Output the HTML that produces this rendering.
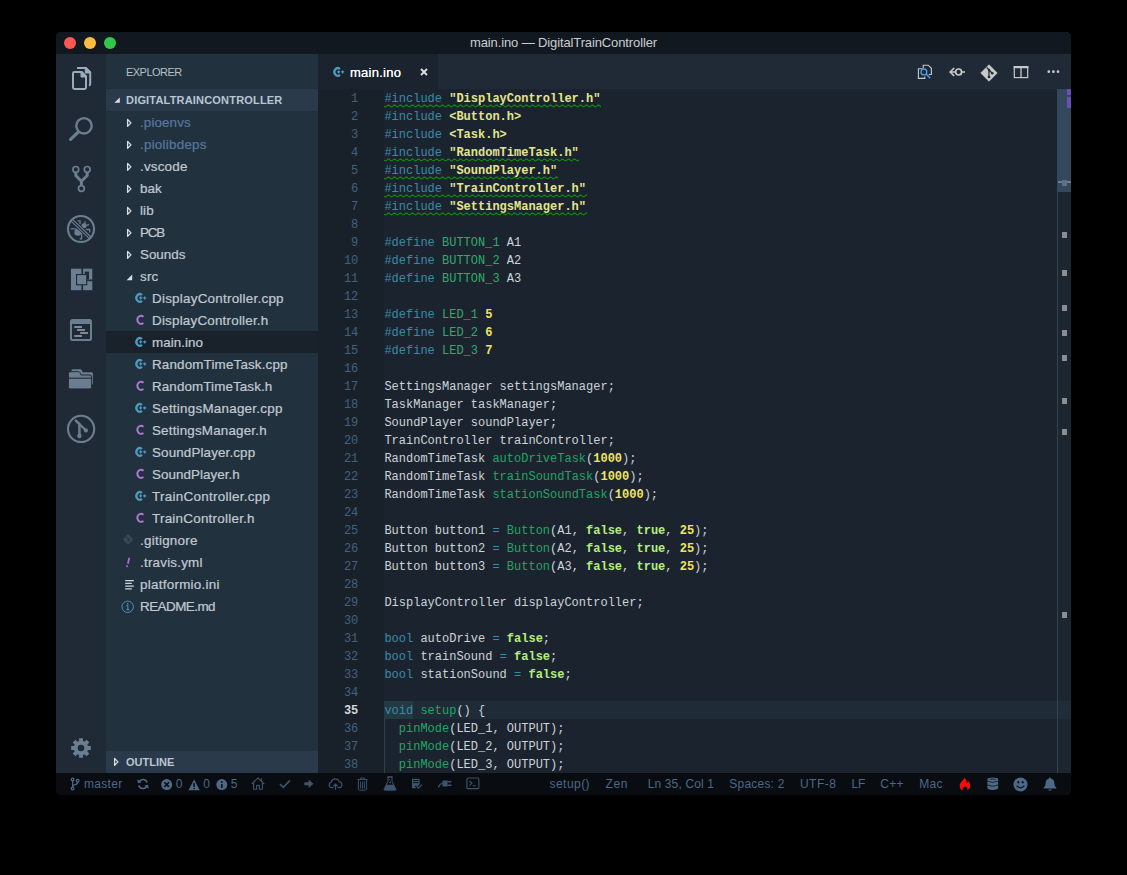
<!DOCTYPE html>
<html>
<head>
<meta charset="utf-8">
<style>
*{box-sizing:border-box;margin:0;padding:0}
html,body{width:1127px;height:875px;background:#000;overflow:hidden}
body{font-family:"Liberation Sans",sans-serif;position:relative}
.win{position:absolute;left:56px;top:32px;width:1015px;height:763px;border-radius:5px;overflow:hidden;background:#1b242e}
.title{position:absolute;left:0;top:0;width:1015px;height:22px;background:#121820;color:#c9cdd2;font-size:13px;line-height:21px;text-align:center}
.tl{position:absolute;top:5px;width:12px;height:12px;border-radius:50%}
.activity{position:absolute;left:0;top:22px;width:50px;height:719px;background:#1f2a36}
.activity svg{position:absolute;left:0}
.sidebar{position:absolute;left:50px;top:22px;width:212px;height:719px;background:#22313e;color:#c0c9d2;font-size:13px}
.sb-title{position:absolute;left:20px;top:0;height:35px;line-height:36px;font-size:11px;color:#b4c0cc}
.sb-head{position:absolute;left:0;width:212px;height:22px;background:#2a3a4a;font-size:11px;font-weight:bold;line-height:22px;color:#b9c6d3;padding-left:20px}
.row{position:absolute;left:0;width:212px;height:22px;line-height:22px;white-space:nowrap}
.row .lbl{position:absolute;top:1px;font-size:13.4px;-webkit-text-stroke:0.22px currentColor}
.row svg{position:absolute}
.row.sel{background:#19222b}
.dim{color:#56779f}
.editor{position:absolute;left:262px;top:22px;width:753px;height:719px;background:#1b242e}
.tabs{position:absolute;left:0;top:0;width:753px;height:35px;background:#1f2a36}
.tab{position:absolute;left:0;top:0;width:120px;height:35px;background:#1b242e;color:#fff;font-size:13px;line-height:36px}
.tabs svg{position:absolute}
.code{position:absolute;left:0;top:35px;width:753px;height:684px;font-family:"Liberation Mono",monospace;font-size:12px;line-height:18px;color:#cdd3da;white-space:pre}
.ln{position:absolute;left:0;width:40.3px;text-align:right;color:#46607c}
.cl{position:absolute;left:66.4px}
.k{color:#3b8aa8}
.s{color:#e4e58e;font-weight:bold}
.m{color:#2cab6c}
.n{color:#efe462;font-weight:bold}
.f{color:#21a565}
.b{color:#b5ee7c;font-weight:bold}
.status{position:absolute;left:0;top:741px;width:1015px;height:22px;background:#090d11;color:#4b6888;font-size:12px;line-height:22px;white-space:nowrap}
.status span{position:absolute;top:0}
.status svg{position:absolute}
.abs{position:absolute}
</style>
</head>
<body>
<div class="win">
  <div class="title" style="letter-spacing:-0.12px">main.ino — DigitalTrainController
    <div class="tl" style="left:8px;background:#fc5753"></div>
    <div class="tl" style="left:28px;background:#fdbc40"></div>
    <div class="tl" style="left:48px;background:#33c748"></div>
  </div>
  <div class="activity"><svg width="50" height="719" viewBox="0 0 50 719" style="top:0"><g fill="none" stroke="#9aabbb" stroke-width="2" stroke-linejoin="round">
<path d="M21 14 H29.8 L34.2 18.4 V30 Q34.2 31.4 32.9 31.5"/>
<path d="M29.8 14 V18.4 H34.2 Z" fill="#9aabbb"/>
<path d="M18.4 18 H25.5 L30 22.5 V33.6 Q30 35 28.6 35 H18.4 Q17 35 17 33.6 V19.4 Q17 18 18.4 18 Z"/>
<path d="M25.5 18 V22.5 H30 Z" fill="#9aabbb"/>
</g><g fill="none" stroke="#6b7e8f" stroke-linecap="round">
<circle cx="28" cy="71.8" r="7.7" stroke-width="2.4"/>
<path d="M22.3 78 L14.6 85.3" stroke-width="3.2"/>
</g><g fill="none" stroke="#6b7e8f">
<circle cx="19.8" cy="115.4" r="2.9" stroke-width="1.7"/>
<circle cx="31.2" cy="115.4" r="2.9" stroke-width="1.7"/>
<circle cx="25.4" cy="134.5" r="2.9" stroke-width="1.7"/>
<path d="M19.8 118.5 V121.5 L25.4 127.3 L31.2 121.5 V118.5 M25.4 127 V131.5" stroke-width="3" stroke-linejoin="round"/>
</g><g fill="none" stroke="#6b7e8f" stroke-width="1.3">
<path d="M21.5 166.8 H24 V170.2"/>
<path d="M29 167.2 V170"/>
<path d="M30 171.6 L33 170.4"/>
<path d="M29.6 175.5 H33.7 V178.4"/>
<path d="M14.6 174.8 H19.8 L21 176"/>
<path d="M25.6 179 V184.7 L23.8 185.2"/>
</g>
<circle cx="28" cy="171.8" r="2.5" fill="#6b7e8f"/>
<ellipse cx="21.8" cy="178.5" rx="3.5" ry="3.3" fill="#6b7e8f"/>
<path d="M15.6 166 L34.2 183.8" stroke="#1f2a36" stroke-width="4.8" fill="none"/>
<path d="M15.6 166 L34.2 183.8" stroke="#6b7e8f" stroke-width="3.3" fill="none"/>
<path d="M15.6 166 L34.2 183.8" stroke="#1f2a36" stroke-width="1.05" fill="none"/>
<circle cx="25" cy="175" r="13" fill="none" stroke="#6b7e8f" stroke-width="2.1"/>
<g>
<rect x="15" y="214.7" width="21.3" height="21.5" fill="#6b7e8f"/>
<rect x="25.4" y="214" width="1.7" height="23" fill="#1f2a36"/>
<rect x="30" y="225.5" width="7" height="1.7" fill="#1f2a36"/>
<rect x="28.8" y="217.6" width="4.2" height="7.9" fill="#1f2a36"/>
<rect x="20" y="220" width="11.3" height="11.3" fill="#1f2a36"/>
<rect x="21.1" y="221.1" width="9.1" height="9.1" fill="#6b7e8f"/>
</g><g>
<rect x="15" y="266" width="20" height="20" rx="1.5" fill="none" stroke="#6b7e8f" stroke-width="2"/>
<rect x="15" y="266" width="20" height="4" fill="#6b7e8f"/>
<g stroke="#7b8b99" stroke-width="2">
<path d="M18.3 273 H26 M21.1 276 H28.9 M24.2 279 H32 M18.3 282 H26"/>
</g>
</g><g fill="#6b7e8f">
<path d="M15.5 316.6 Q15.5 315.2 17 315.2 H24.3 Q25.4 315.2 25.9 316.4 L26.7 318.2 H35.5 Q36.9 318.2 36.9 319.6 V329.5 Q36.9 330.9 35.5 330.9 H15.5 Z"/>
<path d="M12.4 319.5 Q12.4 317.7 14.2 317.7 H22.5 Q23.6 317.7 24.1 318.8 L25 321 H33.9 Q35.6 321 35.6 322.7 V333.2 Q35.6 334.9 33.9 334.9 H14.2 Q12.4 334.9 12.4 333.2 Z" stroke="#1f2a36" stroke-width="1"/>
<rect x="12.9" y="323.6" width="22.2" height="1.1" fill="#1f2a36"/>
</g><g fill="none" stroke="#6b7e8f">
<circle cx="25.1" cy="374.9" r="13.1" stroke-width="2.1"/>
<path d="M19.8 366.6 L23.4 370 V381.5" stroke-width="2.5" stroke-linejoin="round" stroke-linecap="round"/>
<path d="M23.8 370.5 L29.6 376" stroke-width="2.3" stroke-linecap="round"/>
</g>
<circle cx="23.4" cy="382" r="2.2" fill="#6b7e8f"/>
<circle cx="29.9" cy="376.4" r="2.1" fill="#6b7e8f"/>
<path d="M31.94 692.08 L34.80 692.01 L34.80 695.99 L31.94 695.92 L31.26 697.55 L33.33 699.53 L30.53 702.33 L28.55 700.26 L26.92 700.94 L26.99 703.80 L23.01 703.80 L23.08 700.94 L21.45 700.26 L19.47 702.33 L16.67 699.53 L18.74 697.55 L18.06 695.92 L15.20 695.99 L15.20 692.01 L18.06 692.08 L18.74 690.45 L16.67 688.47 L19.47 685.67 L21.45 687.74 L23.08 687.06 L23.01 684.20 L26.99 684.20 L26.92 687.06 L28.55 687.74 L30.53 685.67 L33.33 688.47 L31.26 690.45 Z M21.70 694.00 a3.30 3.30 0 1 0 6.60 0 a3.30 3.30 0 1 0 -6.60 0 Z" fill="#6b7e8f" fill-rule="evenodd"/></svg></div>
  <div class="sidebar">
    <div class="sb-title" style="letter-spacing:-0.530px">EXPLORER</div>
    <div class="sb-head" style="top:35px;letter-spacing:0.188px"><svg class="abs" style="left:7.6px;top:7.6px" width="7" height="7" viewBox="0 0 7 7"><path d="M5.8 0.4 V5.8 H0.4 Z" fill="#d9dee4"/></svg>DIGITALTRAINCONTROLLER</div>
<div class="row" style="top:57px"><svg style="left:20px;top:6.5px" width="7" height="10" viewBox="0 0 7 10"><path d="M1.6 1.4 L4.9 4.9 L1.6 8.4 Z" fill="none" stroke="#d9dee4" stroke-width="1.3" stroke-linejoin="round"/></svg><span class="lbl dim" style="left:34.0px;letter-spacing:0.113px">.pioenvs</span></div>
<div class="row" style="top:79px"><svg style="left:20px;top:6.5px" width="7" height="10" viewBox="0 0 7 10"><path d="M1.6 1.4 L4.9 4.9 L1.6 8.4 Z" fill="none" stroke="#d9dee4" stroke-width="1.3" stroke-linejoin="round"/></svg><span class="lbl dim" style="left:34.0px;letter-spacing:0.244px">.piolibdeps</span></div>
<div class="row" style="top:101px"><svg style="left:20px;top:6.5px" width="7" height="10" viewBox="0 0 7 10"><path d="M1.6 1.4 L4.9 4.9 L1.6 8.4 Z" fill="none" stroke="#d9dee4" stroke-width="1.3" stroke-linejoin="round"/></svg><span class="lbl" style="left:34.0px;letter-spacing:0.204px">.vscode</span></div>
<div class="row" style="top:123px"><svg style="left:20px;top:6.5px" width="7" height="10" viewBox="0 0 7 10"><path d="M1.6 1.4 L4.9 4.9 L1.6 8.4 Z" fill="none" stroke="#d9dee4" stroke-width="1.3" stroke-linejoin="round"/></svg><span class="lbl" style="left:34.0px;letter-spacing:0.048px">bak</span></div>
<div class="row" style="top:145px"><svg style="left:20px;top:6.5px" width="7" height="10" viewBox="0 0 7 10"><path d="M1.6 1.4 L4.9 4.9 L1.6 8.4 Z" fill="none" stroke="#d9dee4" stroke-width="1.3" stroke-linejoin="round"/></svg><span class="lbl" style="left:34.0px;letter-spacing:0.147px">lib</span></div>
<div class="row" style="top:167px"><svg style="left:20px;top:6.5px" width="7" height="10" viewBox="0 0 7 10"><path d="M1.6 1.4 L4.9 4.9 L1.6 8.4 Z" fill="none" stroke="#d9dee4" stroke-width="1.3" stroke-linejoin="round"/></svg><span class="lbl" style="left:34.0px;letter-spacing:-1.127px">PCB</span></div>
<div class="row" style="top:189px"><svg style="left:20px;top:6.5px" width="7" height="10" viewBox="0 0 7 10"><path d="M1.6 1.4 L4.9 4.9 L1.6 8.4 Z" fill="none" stroke="#d9dee4" stroke-width="1.3" stroke-linejoin="round"/></svg><span class="lbl" style="left:34.0px;letter-spacing:-0.009px">Sounds</span></div>
<div class="row" style="top:211px"><svg style="left:20px;top:9px" width="7" height="7" viewBox="0 0 7 7"><path d="M6.2 0.6 V6.2 H0.6 Z" fill="#d9dee4"/></svg><span class="lbl" style="left:34.0px;letter-spacing:0.219px">src</span></div>
<div class="row" style="top:233px"><svg class="abs" style="left:28.7px;top:5.1px" width="13" height="12" viewBox="0 0 13 12"><path d="M6.9 3.1 A3.2 3.9 0 1 0 6.9 8.7" fill="none" stroke="#4c9cc0" stroke-width="2.3"/><path d="M4.1 5.9 H7.3 M5.7 4.3 V7.5 M8.2 5.9 H11.2 M9.7 4.4 V7.4" stroke="#4c9cc0" stroke-width="1.15" fill="none"/></svg><span class="lbl" style="left:46.0px;letter-spacing:0.250px">DisplayController.cpp</span></div>
<div class="row" style="top:255px"><svg style="left:29px;top:5px" width="10" height="12" viewBox="0 0 10 12"><path d="M8.4 2.8 A3.5 4.1 0 1 0 8.4 8.8" fill="none" stroke="#ae76d2" stroke-width="1.95"/></svg><span class="lbl" style="left:46.0px;letter-spacing:0.214px">DisplayController.h</span></div>
<div class="row sel" style="top:277px"><svg class="abs" style="left:28.7px;top:5.1px" width="13" height="12" viewBox="0 0 13 12"><path d="M6.9 3.1 A3.2 3.9 0 1 0 6.9 8.7" fill="none" stroke="#4c9cc0" stroke-width="2.3"/><path d="M4.1 5.9 H7.3 M5.7 4.3 V7.5 M8.2 5.9 H11.2 M9.7 4.4 V7.4" stroke="#4c9cc0" stroke-width="1.15" fill="none"/></svg><span class="lbl" style="left:46.0px;letter-spacing:0.036px">main.ino</span></div>
<div class="row" style="top:299px"><svg class="abs" style="left:28.7px;top:5.1px" width="13" height="12" viewBox="0 0 13 12"><path d="M6.9 3.1 A3.2 3.9 0 1 0 6.9 8.7" fill="none" stroke="#4c9cc0" stroke-width="2.3"/><path d="M4.1 5.9 H7.3 M5.7 4.3 V7.5 M8.2 5.9 H11.2 M9.7 4.4 V7.4" stroke="#4c9cc0" stroke-width="1.15" fill="none"/></svg><span class="lbl" style="left:46.0px;letter-spacing:0.165px">RandomTimeTask.cpp</span></div>
<div class="row" style="top:321px"><svg style="left:29px;top:5px" width="10" height="12" viewBox="0 0 10 12"><path d="M8.4 2.8 A3.5 4.1 0 1 0 8.4 8.8" fill="none" stroke="#ae76d2" stroke-width="1.95"/></svg><span class="lbl" style="left:46.0px;letter-spacing:0.110px">RandomTimeTask.h</span></div>
<div class="row" style="top:343px"><svg class="abs" style="left:28.7px;top:5.1px" width="13" height="12" viewBox="0 0 13 12"><path d="M6.9 3.1 A3.2 3.9 0 1 0 6.9 8.7" fill="none" stroke="#4c9cc0" stroke-width="2.3"/><path d="M4.1 5.9 H7.3 M5.7 4.3 V7.5 M8.2 5.9 H11.2 M9.7 4.4 V7.4" stroke="#4c9cc0" stroke-width="1.15" fill="none"/></svg><span class="lbl" style="left:46.0px;letter-spacing:0.251px">SettingsManager.cpp</span></div>
<div class="row" style="top:365px"><svg style="left:29px;top:5px" width="10" height="12" viewBox="0 0 10 12"><path d="M8.4 2.8 A3.5 4.1 0 1 0 8.4 8.8" fill="none" stroke="#ae76d2" stroke-width="1.95"/></svg><span class="lbl" style="left:46.0px;letter-spacing:0.185px">SettingsManager.h</span></div>
<div class="row" style="top:387px"><svg class="abs" style="left:28.7px;top:5.1px" width="13" height="12" viewBox="0 0 13 12"><path d="M6.9 3.1 A3.2 3.9 0 1 0 6.9 8.7" fill="none" stroke="#4c9cc0" stroke-width="2.3"/><path d="M4.1 5.9 H7.3 M5.7 4.3 V7.5 M8.2 5.9 H11.2 M9.7 4.4 V7.4" stroke="#4c9cc0" stroke-width="1.15" fill="none"/></svg><span class="lbl" style="left:46.0px;letter-spacing:0.135px">SoundPlayer.cpp</span></div>
<div class="row" style="top:409px"><svg style="left:29px;top:5px" width="10" height="12" viewBox="0 0 10 12"><path d="M8.4 2.8 A3.5 4.1 0 1 0 8.4 8.8" fill="none" stroke="#ae76d2" stroke-width="1.95"/></svg><span class="lbl" style="left:46.0px;letter-spacing:0.045px">SoundPlayer.h</span></div>
<div class="row" style="top:431px"><svg class="abs" style="left:28.7px;top:5.1px" width="13" height="12" viewBox="0 0 13 12"><path d="M6.9 3.1 A3.2 3.9 0 1 0 6.9 8.7" fill="none" stroke="#4c9cc0" stroke-width="2.3"/><path d="M4.1 5.9 H7.3 M5.7 4.3 V7.5 M8.2 5.9 H11.2 M9.7 4.4 V7.4" stroke="#4c9cc0" stroke-width="1.15" fill="none"/></svg><span class="lbl" style="left:46.0px;letter-spacing:0.289px">TrainController.cpp</span></div>
<div class="row" style="top:453px"><svg style="left:29px;top:5px" width="10" height="12" viewBox="0 0 10 12"><path d="M8.4 2.8 A3.5 4.1 0 1 0 8.4 8.8" fill="none" stroke="#ae76d2" stroke-width="1.95"/></svg><span class="lbl" style="left:46.0px;letter-spacing:0.253px">TrainController.h</span></div>
<div class="row" style="top:475px"><svg style="left:15.6px;top:5.3px" width="12" height="11" viewBox="0 0 12 11"><path d="M6 0.3 L11.4 5.5 L6 10.7 L0.6 5.5 Z" fill="#3b4954"/><path d="M4.4 2.8 L6.1 4.5 V8.2 M6.4 4.8 L8 6.4" stroke="#233140" stroke-width="1" fill="none"/></svg><span class="lbl" style="left:34.0px;letter-spacing:0.264px">.gitignore</span></div>
<div class="row" style="top:497px"><svg style="left:19px;top:5.5px" width="6" height="11" viewBox="0 0 6 11"><path d="M4.2 0.8 L2.9 6.8" stroke="#b56ad8" stroke-width="1.7" fill="none"/><circle cx="2.1" cy="9.3" r="0.95" fill="#b56ad8"/></svg><span class="lbl" style="left:34.0px;letter-spacing:0.220px">.travis.yml</span></div>
<div class="row" style="top:519px"><svg style="left:19px;top:5.5px" width="10" height="11" viewBox="0 0 10 11"><path d="M0.2 1.7 H8.9 M0.2 4.4 H6.8 M0.2 7.1 H8.9 M0.2 9.8 H6.8" stroke="#cdd3d9" stroke-width="1.2"/></svg><span class="lbl" style="left:34.0px;letter-spacing:0.280px">platformio.ini</span></div>
<div class="row" style="top:541px"><svg style="left:15px;top:4.6px" width="14" height="14" viewBox="0 0 14 14"><circle cx="6.7" cy="6.8" r="5.7" fill="none" stroke="#4c9cc0" stroke-width="0.9"/><path d="M6.9 5.6 V9.6 M5.4 9.7 H8.4 M5.5 5.6 H6.9" stroke="#4c9cc0" stroke-width="1" fill="none"/><circle cx="6.7" cy="3.7" r="0.8" fill="#4c9cc0"/></svg><span class="lbl" style="left:34.0px;letter-spacing:-0.508px">README.md</span></div>
    <div class="sb-head" style="top:697px"><svg class="abs" style="left:7px;top:5.8px" width="7" height="10" viewBox="0 0 7 10"><path d="M1.6 1.4 L4.9 4.9 L1.6 8.4 Z" fill="none" stroke="#d9dee4" stroke-width="1.3" stroke-linejoin="round"/></svg>OUTLINE</div>
  </div>
  <div class="editor">
    <div class="tabs"><div class="tab"><svg class="abs" style="left:14.6px;top:12.1px" width="13" height="12" viewBox="0 0 13 12"><path d="M6.9 3.1 A3.2 3.9 0 1 0 6.9 8.7" fill="none" stroke="#4c9cc0" stroke-width="2.3"/><path d="M4.1 5.9 H7.3 M5.7 4.3 V7.5 M8.2 5.9 H11.2 M9.7 4.4 V7.4" stroke="#4c9cc0" stroke-width="1.15" fill="none"/></svg><span class="abs" style="left:32px;top:1px;letter-spacing:0.252px;text-shadow:0 0 0.6px #fff">main.ino</span><svg class="abs" style="left:102px;top:14px" width="8" height="8" viewBox="0 0 8 8"><path d="M1 1 L7 7 M7 1 L1 7" stroke="#d9dde2" stroke-width="1.9" fill="none"/></svg></div><svg style="left:599px;top:10px" width="16" height="16" viewBox="0 0 16 16">
<g fill="none" stroke="#c7c9cc" stroke-width="1.1">
<path d="M6.2 4.2 V1.2 H11.3 L14.4 4.3 V10.5 H11.8"/>
<path d="M5.5 4.8 H1.4 V14.4 H7.8 V12.6"/>
</g>
<circle cx="6.9" cy="7.9" r="2.9" fill="#1f2a36" stroke="#4ba3ee" stroke-width="1.3"/>
<path d="M9.1 10.1 L13.2 14.2" stroke="#4ba3ee" stroke-width="1.4"/>
</svg><svg style="left:631px;top:12px" width="17" height="12" viewBox="0 0 17 12">
<g fill="none" stroke="#c7c9cc">
<circle cx="9.6" cy="6" r="3" stroke-width="1.7"/>
<path d="M12.6 6 H16 M6.6 6 H2" stroke-width="1.5"/>
<path d="M5.2 2 L1.2 6 L5.2 10" stroke-width="1.7"/>
</g></svg><svg style="left:662px;top:9.5px" width="18" height="18" viewBox="0 0 18 18">
<path d="M9 0.8 L17.2 9 L9 17.2 L0.8 9 Z" fill="#c7c9cc" stroke="#c7c9cc" stroke-width="0.8" stroke-linejoin="round"/>
<g stroke="#1f2a36" stroke-width="1.3" fill="none"><path d="M6.6 3.4 L9 5.8 V13 M9.3 6.3 L12.2 9.2"/></g>
<circle cx="9" cy="13" r="1.3" fill="#1f2a36"/><circle cx="12.3" cy="9.3" r="1.3" fill="#1f2a36"/><circle cx="9" cy="6" r="1.2" fill="#1f2a36"/>
</svg><svg style="left:695px;top:11px" width="16" height="14" viewBox="0 0 16 14">
<rect x="1.3" y="1.6" width="13.4" height="11" fill="none" stroke="#c7c9cc" stroke-width="1.2"/>
<rect x="0.7" y="1" width="14.6" height="2.2" fill="#c7c9cc"/>
<path d="M8 2 V13" stroke="#c7c9cc" stroke-width="1.3"/>
</svg><svg style="left:728px;top:15px" width="16" height="6" viewBox="0 0 16 6">
<circle cx="2.8" cy="2.7" r="1.35" fill="#c7c9cc"/><circle cx="7.4" cy="2.7" r="1.35" fill="#c7c9cc"/><circle cx="12" cy="2.7" r="1.35" fill="#c7c9cc"/></svg></div>
    <div class="code"><div class="abs" style="left:0;top:0;width:66px;height:684px;background:#18212a"></div>
<div class="abs" style="left:66px;top:612px;width:673px;height:18px;background:#1f2b36"></div>
<div class="abs" style="left:66px;top:612px;width:29px;height:18px;background:#223a41"></div>
<div class="abs" style="left:66px;top:630px;width:1px;height:54px;background:#33404c"></div>
<div class="ln" style="top:1px">1</div><div class="cl" style="top:1px"><span class="k">#include</span> <span class="s">&quot;DisplayController.h&quot;</span></div>
<svg class="abs" style="left:66px;top:14.7px" width="217" height="4" viewBox="0 0 217 4"><path d="M0 2 Q1.5 3.8 3.0 2 Q4.5 0.2 6.0 2 Q7.5 3.8 9.0 2 Q10.5 0.2 12.0 2 Q13.5 3.8 15.0 2 Q16.5 0.2 18.0 2 Q19.5 3.8 21.0 2 Q22.5 0.2 24.0 2 Q25.5 3.8 27.0 2 Q28.5 0.2 30.0 2 Q31.5 3.8 33.0 2 Q34.5 0.2 36.0 2 Q37.5 3.8 39.0 2 Q40.5 0.2 42.0 2 Q43.5 3.8 45.0 2 Q46.5 0.2 48.0 2 Q49.5 3.8 51.0 2 Q52.5 0.2 54.0 2 Q55.5 3.8 57.0 2 Q58.5 0.2 60.0 2 Q61.5 3.8 63.0 2 Q64.5 0.2 66.0 2 Q67.5 3.8 69.0 2 Q70.5 0.2 72.0 2 Q73.5 3.8 75.0 2 Q76.5 0.2 78.0 2 Q79.5 3.8 81.0 2 Q82.5 0.2 84.0 2 Q85.5 3.8 87.0 2 Q88.5 0.2 90.0 2 Q91.5 3.8 93.0 2 Q94.5 0.2 96.0 2 Q97.5 3.8 99.0 2 Q100.5 0.2 102.0 2 Q103.5 3.8 105.0 2 Q106.5 0.2 108.0 2 Q109.5 3.8 111.0 2 Q112.5 0.2 114.0 2 Q115.5 3.8 117.0 2 Q118.5 0.2 120.0 2 Q121.5 3.8 123.0 2 Q124.5 0.2 126.0 2 Q127.5 3.8 129.0 2 Q130.5 0.2 132.0 2 Q133.5 3.8 135.0 2 Q136.5 0.2 138.0 2 Q139.5 3.8 141.0 2 Q142.5 0.2 144.0 2 Q145.5 3.8 147.0 2 Q148.5 0.2 150.0 2 Q151.5 3.8 153.0 2 Q154.5 0.2 156.0 2 Q157.5 3.8 159.0 2 Q160.5 0.2 162.0 2 Q163.5 3.8 165.0 2 Q166.5 0.2 168.0 2 Q169.5 3.8 171.0 2 Q172.5 0.2 174.0 2 Q175.5 3.8 177.0 2 Q178.5 0.2 180.0 2 Q181.5 3.8 183.0 2 Q184.5 0.2 186.0 2 Q187.5 3.8 189.0 2 Q190.5 0.2 192.0 2 Q193.5 3.8 195.0 2 Q196.5 0.2 198.0 2 Q199.5 3.8 201.0 2 Q202.5 0.2 204.0 2 Q205.5 3.8 207.0 2 Q208.5 0.2 210.0 2 Q211.5 3.8 213.0 2 Q214.5 0.2 216.0 2 Q217.5 3.8 219.0 2 Q220.5 0.2 222.0 2 Q223.5 3.8 225.0 2 Q226.5 0.2 228.0 2" fill="none" stroke="#0a960a" stroke-width="1.15"/></svg>
<div class="ln" style="top:19px">2</div><div class="cl" style="top:19px"><span class="k">#include</span> <span class="s">&lt;Button.h&gt;</span></div>
<div class="ln" style="top:37px">3</div><div class="cl" style="top:37px"><span class="k">#include</span> <span class="s">&lt;Task.h&gt;</span></div>
<div class="ln" style="top:55px">4</div><div class="cl" style="top:55px"><span class="k">#include</span> <span class="s">&quot;RandomTimeTask.h&quot;</span></div>
<svg class="abs" style="left:66px;top:68.7px" width="195" height="4" viewBox="0 0 195 4"><path d="M0 2 Q1.5 3.8 3.0 2 Q4.5 0.2 6.0 2 Q7.5 3.8 9.0 2 Q10.5 0.2 12.0 2 Q13.5 3.8 15.0 2 Q16.5 0.2 18.0 2 Q19.5 3.8 21.0 2 Q22.5 0.2 24.0 2 Q25.5 3.8 27.0 2 Q28.5 0.2 30.0 2 Q31.5 3.8 33.0 2 Q34.5 0.2 36.0 2 Q37.5 3.8 39.0 2 Q40.5 0.2 42.0 2 Q43.5 3.8 45.0 2 Q46.5 0.2 48.0 2 Q49.5 3.8 51.0 2 Q52.5 0.2 54.0 2 Q55.5 3.8 57.0 2 Q58.5 0.2 60.0 2 Q61.5 3.8 63.0 2 Q64.5 0.2 66.0 2 Q67.5 3.8 69.0 2 Q70.5 0.2 72.0 2 Q73.5 3.8 75.0 2 Q76.5 0.2 78.0 2 Q79.5 3.8 81.0 2 Q82.5 0.2 84.0 2 Q85.5 3.8 87.0 2 Q88.5 0.2 90.0 2 Q91.5 3.8 93.0 2 Q94.5 0.2 96.0 2 Q97.5 3.8 99.0 2 Q100.5 0.2 102.0 2 Q103.5 3.8 105.0 2 Q106.5 0.2 108.0 2 Q109.5 3.8 111.0 2 Q112.5 0.2 114.0 2 Q115.5 3.8 117.0 2 Q118.5 0.2 120.0 2 Q121.5 3.8 123.0 2 Q124.5 0.2 126.0 2 Q127.5 3.8 129.0 2 Q130.5 0.2 132.0 2 Q133.5 3.8 135.0 2 Q136.5 0.2 138.0 2 Q139.5 3.8 141.0 2 Q142.5 0.2 144.0 2 Q145.5 3.8 147.0 2 Q148.5 0.2 150.0 2 Q151.5 3.8 153.0 2 Q154.5 0.2 156.0 2 Q157.5 3.8 159.0 2 Q160.5 0.2 162.0 2 Q163.5 3.8 165.0 2 Q166.5 0.2 168.0 2 Q169.5 3.8 171.0 2 Q172.5 0.2 174.0 2 Q175.5 3.8 177.0 2 Q178.5 0.2 180.0 2 Q181.5 3.8 183.0 2 Q184.5 0.2 186.0 2 Q187.5 3.8 189.0 2 Q190.5 0.2 192.0 2 Q193.5 3.8 195.0 2 Q196.5 0.2 198.0 2 Q199.5 3.8 201.0 2 Q202.5 0.2 204.0 2" fill="none" stroke="#0a960a" stroke-width="1.15"/></svg>
<div class="ln" style="top:73px">5</div><div class="cl" style="top:73px"><span class="k">#include</span> <span class="s">&quot;SoundPlayer.h&quot;</span></div>
<svg class="abs" style="left:66px;top:86.7px" width="174" height="4" viewBox="0 0 174 4"><path d="M0 2 Q1.5 3.8 3.0 2 Q4.5 0.2 6.0 2 Q7.5 3.8 9.0 2 Q10.5 0.2 12.0 2 Q13.5 3.8 15.0 2 Q16.5 0.2 18.0 2 Q19.5 3.8 21.0 2 Q22.5 0.2 24.0 2 Q25.5 3.8 27.0 2 Q28.5 0.2 30.0 2 Q31.5 3.8 33.0 2 Q34.5 0.2 36.0 2 Q37.5 3.8 39.0 2 Q40.5 0.2 42.0 2 Q43.5 3.8 45.0 2 Q46.5 0.2 48.0 2 Q49.5 3.8 51.0 2 Q52.5 0.2 54.0 2 Q55.5 3.8 57.0 2 Q58.5 0.2 60.0 2 Q61.5 3.8 63.0 2 Q64.5 0.2 66.0 2 Q67.5 3.8 69.0 2 Q70.5 0.2 72.0 2 Q73.5 3.8 75.0 2 Q76.5 0.2 78.0 2 Q79.5 3.8 81.0 2 Q82.5 0.2 84.0 2 Q85.5 3.8 87.0 2 Q88.5 0.2 90.0 2 Q91.5 3.8 93.0 2 Q94.5 0.2 96.0 2 Q97.5 3.8 99.0 2 Q100.5 0.2 102.0 2 Q103.5 3.8 105.0 2 Q106.5 0.2 108.0 2 Q109.5 3.8 111.0 2 Q112.5 0.2 114.0 2 Q115.5 3.8 117.0 2 Q118.5 0.2 120.0 2 Q121.5 3.8 123.0 2 Q124.5 0.2 126.0 2 Q127.5 3.8 129.0 2 Q130.5 0.2 132.0 2 Q133.5 3.8 135.0 2 Q136.5 0.2 138.0 2 Q139.5 3.8 141.0 2 Q142.5 0.2 144.0 2 Q145.5 3.8 147.0 2 Q148.5 0.2 150.0 2 Q151.5 3.8 153.0 2 Q154.5 0.2 156.0 2 Q157.5 3.8 159.0 2 Q160.5 0.2 162.0 2 Q163.5 3.8 165.0 2 Q166.5 0.2 168.0 2 Q169.5 3.8 171.0 2 Q172.5 0.2 174.0 2 Q175.5 3.8 177.0 2 Q178.5 0.2 180.0 2" fill="none" stroke="#0a960a" stroke-width="1.15"/></svg>
<div class="ln" style="top:91px">6</div><div class="cl" style="top:91px"><span class="k">#include</span> <span class="s">&quot;TrainController.h&quot;</span></div>
<svg class="abs" style="left:66px;top:104.7px" width="203" height="4" viewBox="0 0 203 4"><path d="M0 2 Q1.5 3.8 3.0 2 Q4.5 0.2 6.0 2 Q7.5 3.8 9.0 2 Q10.5 0.2 12.0 2 Q13.5 3.8 15.0 2 Q16.5 0.2 18.0 2 Q19.5 3.8 21.0 2 Q22.5 0.2 24.0 2 Q25.5 3.8 27.0 2 Q28.5 0.2 30.0 2 Q31.5 3.8 33.0 2 Q34.5 0.2 36.0 2 Q37.5 3.8 39.0 2 Q40.5 0.2 42.0 2 Q43.5 3.8 45.0 2 Q46.5 0.2 48.0 2 Q49.5 3.8 51.0 2 Q52.5 0.2 54.0 2 Q55.5 3.8 57.0 2 Q58.5 0.2 60.0 2 Q61.5 3.8 63.0 2 Q64.5 0.2 66.0 2 Q67.5 3.8 69.0 2 Q70.5 0.2 72.0 2 Q73.5 3.8 75.0 2 Q76.5 0.2 78.0 2 Q79.5 3.8 81.0 2 Q82.5 0.2 84.0 2 Q85.5 3.8 87.0 2 Q88.5 0.2 90.0 2 Q91.5 3.8 93.0 2 Q94.5 0.2 96.0 2 Q97.5 3.8 99.0 2 Q100.5 0.2 102.0 2 Q103.5 3.8 105.0 2 Q106.5 0.2 108.0 2 Q109.5 3.8 111.0 2 Q112.5 0.2 114.0 2 Q115.5 3.8 117.0 2 Q118.5 0.2 120.0 2 Q121.5 3.8 123.0 2 Q124.5 0.2 126.0 2 Q127.5 3.8 129.0 2 Q130.5 0.2 132.0 2 Q133.5 3.8 135.0 2 Q136.5 0.2 138.0 2 Q139.5 3.8 141.0 2 Q142.5 0.2 144.0 2 Q145.5 3.8 147.0 2 Q148.5 0.2 150.0 2 Q151.5 3.8 153.0 2 Q154.5 0.2 156.0 2 Q157.5 3.8 159.0 2 Q160.5 0.2 162.0 2 Q163.5 3.8 165.0 2 Q166.5 0.2 168.0 2 Q169.5 3.8 171.0 2 Q172.5 0.2 174.0 2 Q175.5 3.8 177.0 2 Q178.5 0.2 180.0 2 Q181.5 3.8 183.0 2 Q184.5 0.2 186.0 2 Q187.5 3.8 189.0 2 Q190.5 0.2 192.0 2 Q193.5 3.8 195.0 2 Q196.5 0.2 198.0 2 Q199.5 3.8 201.0 2 Q202.5 0.2 204.0 2 Q205.5 3.8 207.0 2 Q208.5 0.2 210.0 2" fill="none" stroke="#0a960a" stroke-width="1.15"/></svg>
<div class="ln" style="top:109px">7</div><div class="cl" style="top:109px"><span class="k">#include</span> <span class="s">&quot;SettingsManager.h&quot;</span></div>
<svg class="abs" style="left:66px;top:122.7px" width="203" height="4" viewBox="0 0 203 4"><path d="M0 2 Q1.5 3.8 3.0 2 Q4.5 0.2 6.0 2 Q7.5 3.8 9.0 2 Q10.5 0.2 12.0 2 Q13.5 3.8 15.0 2 Q16.5 0.2 18.0 2 Q19.5 3.8 21.0 2 Q22.5 0.2 24.0 2 Q25.5 3.8 27.0 2 Q28.5 0.2 30.0 2 Q31.5 3.8 33.0 2 Q34.5 0.2 36.0 2 Q37.5 3.8 39.0 2 Q40.5 0.2 42.0 2 Q43.5 3.8 45.0 2 Q46.5 0.2 48.0 2 Q49.5 3.8 51.0 2 Q52.5 0.2 54.0 2 Q55.5 3.8 57.0 2 Q58.5 0.2 60.0 2 Q61.5 3.8 63.0 2 Q64.5 0.2 66.0 2 Q67.5 3.8 69.0 2 Q70.5 0.2 72.0 2 Q73.5 3.8 75.0 2 Q76.5 0.2 78.0 2 Q79.5 3.8 81.0 2 Q82.5 0.2 84.0 2 Q85.5 3.8 87.0 2 Q88.5 0.2 90.0 2 Q91.5 3.8 93.0 2 Q94.5 0.2 96.0 2 Q97.5 3.8 99.0 2 Q100.5 0.2 102.0 2 Q103.5 3.8 105.0 2 Q106.5 0.2 108.0 2 Q109.5 3.8 111.0 2 Q112.5 0.2 114.0 2 Q115.5 3.8 117.0 2 Q118.5 0.2 120.0 2 Q121.5 3.8 123.0 2 Q124.5 0.2 126.0 2 Q127.5 3.8 129.0 2 Q130.5 0.2 132.0 2 Q133.5 3.8 135.0 2 Q136.5 0.2 138.0 2 Q139.5 3.8 141.0 2 Q142.5 0.2 144.0 2 Q145.5 3.8 147.0 2 Q148.5 0.2 150.0 2 Q151.5 3.8 153.0 2 Q154.5 0.2 156.0 2 Q157.5 3.8 159.0 2 Q160.5 0.2 162.0 2 Q163.5 3.8 165.0 2 Q166.5 0.2 168.0 2 Q169.5 3.8 171.0 2 Q172.5 0.2 174.0 2 Q175.5 3.8 177.0 2 Q178.5 0.2 180.0 2 Q181.5 3.8 183.0 2 Q184.5 0.2 186.0 2 Q187.5 3.8 189.0 2 Q190.5 0.2 192.0 2 Q193.5 3.8 195.0 2 Q196.5 0.2 198.0 2 Q199.5 3.8 201.0 2 Q202.5 0.2 204.0 2 Q205.5 3.8 207.0 2 Q208.5 0.2 210.0 2" fill="none" stroke="#0a960a" stroke-width="1.15"/></svg>
<div class="ln" style="top:127px">8</div><div class="cl" style="top:127px"></div>
<div class="ln" style="top:145px">9</div><div class="cl" style="top:145px"><span class="k">#define</span> <span class="m">BUTTON_1</span> A1</div>
<div class="ln" style="top:163px">10</div><div class="cl" style="top:163px"><span class="k">#define</span> <span class="m">BUTTON_2</span> A2</div>
<div class="ln" style="top:181px">11</div><div class="cl" style="top:181px"><span class="k">#define</span> <span class="m">BUTTON_3</span> A3</div>
<div class="ln" style="top:199px">12</div><div class="cl" style="top:199px"></div>
<div class="ln" style="top:217px">13</div><div class="cl" style="top:217px"><span class="k">#define</span> <span class="m">LED_1</span> <span class="n">5</span></div>
<div class="ln" style="top:235px">14</div><div class="cl" style="top:235px"><span class="k">#define</span> <span class="m">LED_2</span> <span class="n">6</span></div>
<div class="ln" style="top:253px">15</div><div class="cl" style="top:253px"><span class="k">#define</span> <span class="m">LED_3</span> <span class="n">7</span></div>
<div class="ln" style="top:271px">16</div><div class="cl" style="top:271px"></div>
<div class="ln" style="top:289px">17</div><div class="cl" style="top:289px">SettingsManager settingsManager;</div>
<div class="ln" style="top:307px">18</div><div class="cl" style="top:307px">TaskManager taskManager;</div>
<div class="ln" style="top:325px">19</div><div class="cl" style="top:325px">SoundPlayer soundPlayer;</div>
<div class="ln" style="top:343px">20</div><div class="cl" style="top:343px">TrainController trainController;</div>
<div class="ln" style="top:361px">21</div><div class="cl" style="top:361px">RandomTimeTask <span class="f">autoDriveTask</span>(<span class="n">1000</span>);</div>
<div class="ln" style="top:379px">22</div><div class="cl" style="top:379px">RandomTimeTask <span class="f">trainSoundTask</span>(<span class="n">1000</span>);</div>
<div class="ln" style="top:397px">23</div><div class="cl" style="top:397px">RandomTimeTask <span class="f">stationSoundTask</span>(<span class="n">1000</span>);</div>
<div class="ln" style="top:415px">24</div><div class="cl" style="top:415px"></div>
<div class="ln" style="top:433px">25</div><div class="cl" style="top:433px">Button button1 <span class="k">=</span> <span class="f">Button</span>(A1, <span class="b">false</span>, <span class="b">true</span>, <span class="n">25</span>);</div>
<div class="ln" style="top:451px">26</div><div class="cl" style="top:451px">Button button2 <span class="k">=</span> <span class="f">Button</span>(A2, <span class="b">false</span>, <span class="b">true</span>, <span class="n">25</span>);</div>
<div class="ln" style="top:469px">27</div><div class="cl" style="top:469px">Button button3 <span class="k">=</span> <span class="f">Button</span>(A3, <span class="b">false</span>, <span class="b">true</span>, <span class="n">25</span>);</div>
<div class="ln" style="top:487px">28</div><div class="cl" style="top:487px"></div>
<div class="ln" style="top:505px">29</div><div class="cl" style="top:505px">DisplayController displayController;</div>
<div class="ln" style="top:523px">30</div><div class="cl" style="top:523px"></div>
<div class="ln" style="top:541px">31</div><div class="cl" style="top:541px"><span class="k">bool</span> autoDrive <span class="k">=</span> <span class="b">false</span>;</div>
<div class="ln" style="top:559px">32</div><div class="cl" style="top:559px"><span class="k">bool</span> trainSound <span class="k">=</span> <span class="b">false</span>;</div>
<div class="ln" style="top:577px">33</div><div class="cl" style="top:577px"><span class="k">bool</span> stationSound <span class="k">=</span> <span class="b">false</span>;</div>
<div class="ln" style="top:595px">34</div><div class="cl" style="top:595px"></div>
<div class="ln" style="top:613px;color:#d5d7d9;font-weight:bold">35</div><div class="cl" style="top:613px"><span class="k">void</span> <span class="f">setup</span>() {</div>
<div class="ln" style="top:631px">36</div><div class="cl" style="top:631px">  <span class="f">pinMode</span>(LED_1, OUTPUT);</div>
<div class="ln" style="top:649px">37</div><div class="cl" style="top:649px">  <span class="f">pinMode</span>(LED_2, OUTPUT);</div>
<div class="ln" style="top:667px">38</div><div class="cl" style="top:667px">  <span class="f">pinMode</span>(LED_3, OUTPUT);</div><div class="abs" style="left:739px;top:0;width:1px;height:684px;background:#35414c"></div><div class="abs" style="left:740px;top:0;width:13px;height:684px;background:#1c2630"></div><div class="abs" style="left:740px;top:612px;width:13px;height:18px;background:#202c37"></div><div class="abs" style="left:739px;top:0;width:14px;height:103px;background:#34485c"></div><div class="abs" style="left:749px;top:0;width:4px;height:6px;background:#6a4fb8"></div><div class="abs" style="left:749px;top:7.5px;width:4px;height:11.5px;background:#6a4fb8"></div><div class="abs" style="left:740px;top:92px;width:13px;height:2px;background:#6d7c8a"></div><div class="abs" style="left:744px;top:91px;width:5px;height:6px;background:#5f7080"></div><div class="abs" style="left:744px;top:143px;width:5px;height:6px;background:#8a8e92"></div><div class="abs" style="left:744px;top:181px;width:5px;height:6px;background:#8a8e92"></div><div class="abs" style="left:744px;top:216px;width:5px;height:6px;background:#8a8e92"></div><div class="abs" style="left:744px;top:241px;width:5px;height:6px;background:#8a8e92"></div><div class="abs" style="left:744px;top:266px;width:5px;height:6px;background:#8a8e92"></div><div class="abs" style="left:744px;top:309px;width:5px;height:6px;background:#8a8e92"></div><div class="abs" style="left:744px;top:340px;width:5px;height:6px;background:#8a8e92"></div><div class="abs" style="left:744px;top:523px;width:5px;height:6px;background:#8a8e92"></div></div>
  </div>
  <div class="status"><svg style="left:14px;top:4px" width="10" height="14" viewBox="0 0 10 14">
<g fill="none" stroke="#4e6985" stroke-width="1.25">
<circle cx="2.6" cy="2.4" r="1.35"/><circle cx="2.6" cy="11.4" r="1.35"/><circle cx="7.6" cy="3.8" r="1.35"/>
<path d="M2.6 3.8 V10 M7.6 5.2 Q7.5 7.2 5 7.7 Q2.8 8.1 2.6 10"/>
</g></svg><span style="left:27.9px;letter-spacing:0.346px">master</span><svg style="left:80.5px;top:5px" width="12" height="12" viewBox="0 0 12 12">
<g fill="none" stroke="#4e6985" stroke-width="1.6">
<path d="M10.2 4.6 A4.4 4.4 0 0 0 2.2 3.6"/>
<path d="M1.8 7.4 A4.4 4.4 0 0 0 9.8 8.4"/>
</g>
<path d="M0.3 1.2 L0.9 5.3 L4.8 4.2 Z M11.7 10.8 L11.1 6.7 L7.2 7.8 Z" fill="#4e6985"/>
</svg><svg style="left:105px;top:6px" width="12" height="12" viewBox="0 0 12 12">
<circle cx="5.7" cy="5.6" r="5.5" fill="#4e6985"/>
<path d="M3.4 3.3 L8 7.9 M8 3.3 L3.4 7.9" stroke="#090d11" stroke-width="1.6"/></svg><span style="left:119.7px;letter-spacing:0.000px">0</span><svg style="left:131.5px;top:5.5px" width="12" height="12" viewBox="0 0 12 12">
<path d="M6.1 0.6 L11.7 11.2 H0.5 Z" fill="#4e6985"/>
<path d="M6.1 4 V8" stroke="#090d11" stroke-width="1.5"/><circle cx="6.1" cy="9.6" r="0.8" fill="#090d11"/></svg><span style="left:147.2px;letter-spacing:0.000px">0</span><svg style="left:159.5px;top:6px" width="12" height="12" viewBox="0 0 12 12">
<circle cx="5.8" cy="5.6" r="5.5" fill="#4e6985"/>
<path d="M5.8 5 V9" stroke="#090d11" stroke-width="1.6"/><circle cx="5.8" cy="2.9" r="0.95" fill="#090d11"/></svg><span style="left:174.8px;letter-spacing:0.000px">5</span><svg style="left:194.5px;top:4px" width="14" height="13" viewBox="0 0 14 13">
<g fill="none" stroke="#3d546c" stroke-width="1.1" stroke-linejoin="round">
<path d="M0.8 7 L7 0.9 L13.2 7"/>
<path d="M2.6 5.6 V12.2 H5.6 V8.2 H8.4 V12.2 H11.4 V5.6"/>
<path d="M10.3 1.2 V4"/>
</g></svg><svg style="left:222.5px;top:6px" width="12" height="10" viewBox="0 0 12 10">
<path d="M1 5.2 L4.3 8.4 L11 1.4" fill="none" stroke="#3d546c" stroke-width="1.65"/></svg><svg style="left:248px;top:6px" width="10" height="10" viewBox="0 0 10 10">
<path d="M0.3 3.3 H4.6 V0.6 L9.4 4.8 L4.6 9 V6.3 H0.3 Z" fill="#3d546c"/></svg><svg style="left:272px;top:4.5px" width="15" height="12" viewBox="0 0 15 12">
<path d="M5.3 9.6 H3.6 A2.8 2.8 0 0 1 3.3 4.1 A4.1 4.1 0 0 1 11.2 3.7 A3 3 0 0 1 11.6 9.6 H9.7" fill="none" stroke="#3d546c" stroke-width="1.1"/>
<path d="M7.5 11.8 V6.6 M5.3 8.3 L7.5 6 L9.7 8.3" fill="none" stroke="#3d546c" stroke-width="1.2"/></svg><svg style="left:301px;top:4px" width="11" height="14" viewBox="0 0 11 14">
<g fill="none" stroke="#3d546c" stroke-width="0.95">
<path d="M0.4 2.6 H10.6 M3.6 2.6 V1 H7.4 V2.6"/>
<path d="M1.4 3 V12 Q1.4 13.2 2.6 13.2 H8.4 Q9.6 13.2 9.6 12 V3"/>
<path d="M3.6 4.6 V11.6 M5.5 4.6 V11.6 M7.4 4.6 V11.6"/>
</g></svg><svg style="left:327px;top:3px" width="14" height="15" viewBox="0 0 14 15">
<path d="M5 1 H9 V5.4 L12.9 13.2 Q13.2 14.2 12.2 14.2 H1.8 Q0.8 14.2 1.1 13.2 L5 5.4 Z" fill="none" stroke="#3d546c" stroke-width="1"/>
<path d="M3.6 8.8 H10.4 L12.6 13.3 Q12.8 13.9 12.2 13.9 H1.8 Q1.2 13.9 1.4 13.3 Z" fill="#3d546c"/>
<path d="M4.2 1 H9.8" stroke="#3d546c" stroke-width="1.2"/>
<circle cx="7.3" cy="6.3" r="0.9" fill="#3d546c"/><circle cx="6.6" cy="3.6" r="0.6" fill="#3d546c"/></svg><svg style="left:355px;top:4.5px" width="12" height="12" viewBox="0 0 12 12">
<path d="M1 0.8 H8.6 V6.2 L6.2 8.6 L5 7.4 L3.8 8.6 L5.4 10.2 H1 Z" fill="#3d546c"/>
<path d="M2 2.6 H7.6 M2 4.6 H7.6" stroke="#090d11" stroke-width="0.9"/>
<path d="M5.6 8.4 L7.4 10.2 L11 6.6" fill="none" stroke="#3d546c" stroke-width="1.3"/></svg><svg style="left:382px;top:6px" width="14" height="10" viewBox="0 0 14 10">
<path d="M0.4 8.6 Q1.6 4.8 4.6 4.4" fill="none" stroke="#3d546c" stroke-width="1.3"/>
<path d="M4.4 2.6 Q4.4 1.4 5.6 1.4 H9.6 V7.6 H5.6 Q4.4 7.6 4.4 6.4 Z" fill="#3d546c"/>
<path d="M9.6 2.8 H13.4 M9.6 6.2 H13.4" stroke="#3d546c" stroke-width="1.5"/></svg><svg style="left:409.5px;top:4px" width="14" height="13" viewBox="0 0 14 13">
<rect x="0.9" y="1" width="12" height="10.6" rx="1.2" fill="none" stroke="#3d546c" stroke-width="1.1"/>
<path d="M3.5 4 L5.9 6.3 L3.5 8.6 M6.7 8.8 H9.6" fill="none" stroke="#3d546c" stroke-width="1.1"/></svg><span style="left:493.5px;letter-spacing:0.459px">setup()</span><span style="left:549.5px;letter-spacing:0.612px">Zen</span><span style="left:591.7px;letter-spacing:0.145px">Ln 35, Col 1</span><span style="left:673.3px;letter-spacing:0.217px">Spaces: 2</span><span style="left:743.9px;letter-spacing:0.527px">UTF-8</span><span style="left:795.4px;letter-spacing:-0.102px">LF</span><span style="left:824.3px;letter-spacing:0.208px">C++</span><span style="left:863.3px;letter-spacing:0.266px">Mac</span><svg style="left:903px;top:3.5px" width="12" height="14" viewBox="0 0 12 14">
<path d="M5.6 0.5 C6.6 2 7.7 3.4 7.9 6.4 C8.4 5.6 9 4.8 9.6 3.9 C10.4 5.4 11.3 7 11.2 8.8 C11.1 11 9.8 12.6 8 13.4 C8.9 12.4 8.7 10.8 7.5 10 C6.5 9.4 5 9.6 4.2 10.4 C3.4 11.4 3.4 12.6 3.7 13.6 C1.8 12.8 0.7 11 0.7 8.8 C0.7 5.4 4.6 3.6 5.6 0.5 Z" fill="#fb0a08"/></svg><svg style="left:930.6px;top:3.8px" width="12.4" height="13.3" viewBox="0 0 13 14">
<path d="M0.4 2.3 A5.65 1.8 0 0 1 11.7 2.3 V11.7 A5.65 1.9 0 0 1 0.4 11.7 Z" fill="#4e6985"/>
<ellipse cx="6.05" cy="2.2" rx="3.9" ry="0.75" fill="#090d11" opacity="0.55"/>
<path d="M0.2 4.4 Q6.05 7.1 11.9 4.4 M0.2 8.4 Q6.05 11.1 11.9 8.4" fill="none" stroke="#090d11" stroke-width="0.75"/>
</svg><svg style="left:957px;top:3.8px" width="15" height="15" viewBox="0 0 15 15">
<circle cx="7.5" cy="7.5" r="7" fill="#4e6985"/>
<ellipse cx="5.3" cy="5.3" rx="0.9" ry="1.3" fill="#090d11"/><ellipse cx="9.7" cy="5.3" rx="0.9" ry="1.3" fill="#090d11"/>
<path d="M3.6 8.6 Q7.5 13 11.4 8.6" fill="none" stroke="#090d11" stroke-width="1.2"/></svg><svg style="left:987px;top:4px" width="14" height="15" viewBox="0 0 14 15">
<path d="M7 0.6 Q8 0.6 8 1.6 Q11.4 2.6 11.4 6.6 Q11.4 9.6 13.4 10.8 V11.4 H0.6 V10.8 Q2.6 9.6 2.6 6.6 Q2.6 2.6 6 1.6 Q6 0.6 7 0.6 Z" fill="#4e6985"/>
<path d="M5.4 12.4 H8.6 Q8.4 13.8 7 13.8 Q5.6 13.8 5.4 12.4 Z" fill="#4e6985"/></svg></div>
</div>
</body>
</html>
